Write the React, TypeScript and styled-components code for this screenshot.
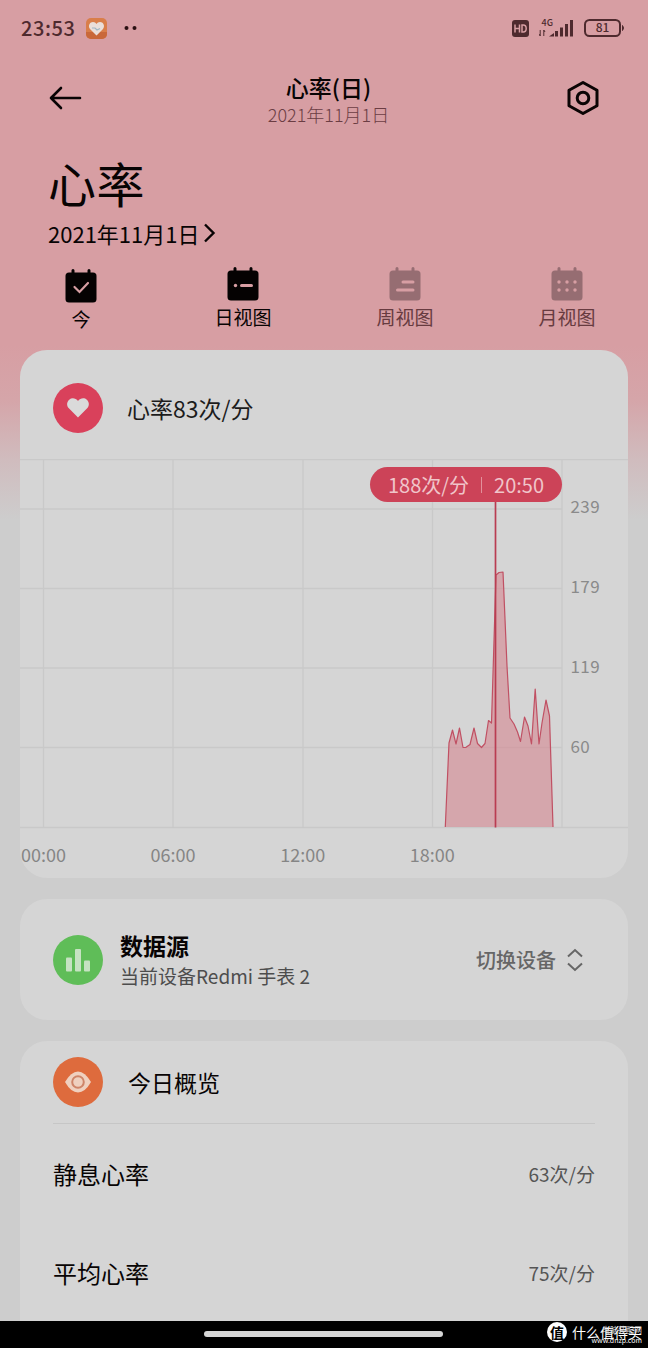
import React from 'react';
import styled, { createGlobalStyle } from 'styled-components';

const GlobalStyle = createGlobalStyle`
  * { box-sizing: border-box; }
  html, body { margin: 0; padding: 0; }
  body { font-family: "Noto Sans CJK SC", sans-serif; color: #050505; }
  svg { display: block; flex: none; }
`;

const Screen = styled.div`
  width: 648px;
  height: 1348px;
  overflow: hidden;
  display: flex;
  flex-direction: column;
  background: linear-gradient(180deg, #d79ea3 0px, #d79ea3 345px, #d5a5a9 400px, #d0bcbe 460px, #cdcdcd 520px, #cdcdcd 100%);
`;

const Label = styled.span<{ $size: number; $lh?: number; $color?: string; $weight?: number; $track?: number }>`
  font-size: ${p => p.$size}px;
  line-height: ${p => p.$lh ?? Math.round(p.$size * 1.3)}px;
  color: ${p => p.$color ?? '#080404'};
  font-weight: ${p => p.$weight ?? 400};
  letter-spacing: ${p => p.$track ?? 0}px;
  white-space: nowrap;
`;

const StatusBar = styled.header`
  height: 56px;
  flex: none;
  display: flex;
  align-items: center;
  justify-content: space-between;
  padding: 0 23px 0 21px;
`;

const StatusGroup = styled.div<{ $gap: number }>`
  display: flex;
  align-items: center;
  gap: ${p => p.$gap}px;
`;

const NavBar = styled.nav`
  height: 84px;
  flex: none;
  display: flex;
  align-items: center;
  justify-content: space-between;
  padding: 0 48px;
`;

const NavTitle = styled.div`
  display: flex;
  flex-direction: column;
  align-items: center;
  padding: 3px 0 0 9px;
`;

const Hero = styled.section`
  height: 124px;
  flex: none;
  display: flex;
  flex-direction: column;
  align-items: flex-start;
  padding: 9px 0 0 48px;
`;

const DateButton = styled.div`
  display: flex;
  align-items: center;
  gap: 4px;
  margin-top: 5px;
`;

const Tabs = styled.div`
  height: 86px;
  flex: none;
  display: grid;
  grid-template-columns: repeat(4, 162px);
`;

const Tab = styled.div<{ $drop?: number }>`
  display: flex;
  flex-direction: column;
  align-items: center;
  gap: 3px;
  padding-top: ${p => 3 + (p.$drop ?? 0)}px;
`;

const Card = styled.section<{ $height: number; $open?: boolean }>`
  height: ${p => p.$height}px;
  flex: none;
  margin: 0 20px ${p => (p.$open ? 0 : 21)}px;
  background: #d5d5d5;
  border-radius: ${p => (p.$open ? '27px 27px 0 0' : '27px')};
  position: relative;
`;

const CardHead = styled.div<{ $height: number; $gap: number; $pad?: number }>`
  height: ${p => p.$height}px;
  display: flex;
  align-items: center;
  gap: ${p => p.$gap}px;
  padding: ${p => p.$pad ?? 0}px 33px 0;
`;

const Disc = styled.div<{ $color: string }>`
  width: 50px;
  height: 50px;
  flex: none;
  border-radius: 50%;
  background: ${p => p.$color};
  display: flex;
  align-items: center;
  justify-content: center;
`;

const Axis = styled.div`
  display: grid;
  grid-template-columns: repeat(4, 129.6px);
  padding: 13px 0 0 1px;
`;

const Tooltip = styled.div`
  position: absolute;
  left: 350px;
  top: 117px;
  width: 192px;
  height: 35px;
  border-radius: 18px;
  background: #cc4358;
  display: flex;
  align-items: center;
  justify-content: center;
  gap: 12px;
`;

const TooltipRule = styled.i`
  width: 1px;
  height: 16px;
  background: #e3909b;
`;

const Stack = styled.div`
  flex: 1;
  display: flex;
  flex-direction: column;
`;

const Switcher = styled.div`
  display: flex;
  align-items: center;
  gap: 11px;
  margin-right: 12px;
`;

const Metric = styled.div`
  height: 99px;
  margin: 0 33px;
  display: flex;
  align-items: center;
  justify-content: space-between;
`;

const Divider = styled.div`
  height: 1px;
  margin: 0 33px;
  background: #c6c6c6;
`;

const BottomBar = styled.footer`
  height: 27px;
  flex: none;
  background: #000;
  display: flex;
  justify-content: flex-end;
  position: relative;
`;

const HomeHandle = styled.div`
  position: absolute;
  left: 204px;
  top: 10px;
  width: 239px;
  height: 6px;
  border-radius: 3px;
  background: #d6d6d6;
`;

const Watermark = styled.div`
  display: flex;
  align-items: center;
  gap: 5px;
  height: 21px;
  padding-right: 6px;
`;

const WatermarkSeal = styled.div`
  width: 20px;
  height: 20px;
  border-radius: 50%;
  background: #fff;
  display: flex;
  align-items: center;
  justify-content: center;
`;

const SiteStamp = styled.div`
  position: absolute;
  right: 6px;
  top: 2px;
  display: flex;
  flex-direction: column;
  align-items: flex-end;
`;

const dark = '#4e2a2e';
const muted = '#966d72';

const CalendarIcon = ({ color, children }: { color: string; children: React.ReactNode }) => (
  <svg width="32" height="34" viewBox="0 0 32 34" fill="none">
    <path d="M8 1.5v5M24 1.5v5" stroke={color} strokeWidth="3" strokeLinecap="round" />
    <rect x="0.5" y="3.5" width="31" height="30" rx="3.5" fill={color} />
    {children}
  </svg>
);

const HORIZONTALS = [0.5, 50, 129.5, 209, 288.5, 368.5];
const VERTICALS = [23.5, 153, 283, 412.5, 542];
const SCALE = [
  [239, 54], [179, 134], [119, 213.5], [60, 293.5],
];
const CURVE =
  '425.3,368 429,284 432.5,271 436,285 439.5,269 443,288.5 446,288.3 450,285.5 454,269 457.5,284.5 461.5,288.5 465,284.5 468.5,261.5 471.5,264 476,116 479,113.5 483,113 487,207 490,259 494,265 497.5,273 500.5,282.5 504.5,258 508,267 511.5,285 515.2,230 519,285 522,264 526,241 529.5,257 533,368';

const HeartRateChart = () => (
  <svg width="608" height="370" viewBox="0 0 608 370">
    {HORIZONTALS.map((y, i) => (
      <line key={y} x1="0" x2={i === 0 || i === 5 ? 608 : 542} y1={y} y2={y} stroke="#c9c9c9" strokeWidth="1.3" />
    ))}
    {VERTICALS.map(x => (
      <line key={x} x1={x} x2={x} y1="0" y2="368.5" stroke="#c9c9c9" strokeWidth="1.3" />
    ))}
    <polygon points={CURVE} fill="#d57f8a" fillOpacity="0.55" />
    <polyline points={CURVE} fill="none" stroke="#c05063" strokeWidth="1.2" strokeLinejoin="round" />
    <line x1="475.5" x2="475.5" y1="40" y2="368.5" stroke="#b93d52" strokeWidth="1.7" />
    {SCALE.map(([value, y]) => (
      <text key={value} x="550.5" y={y} fontFamily="Noto Sans CJK SC" fontSize="17" letterSpacing="0.4" fill="#8a8a8a">
        {value}
      </text>
    ))}
  </svg>
);

export default function App() {
  return (
    <>
      <GlobalStyle />
      <Screen>
        <StatusBar>
          <StatusGroup $gap={10}>
            <Label $size={20} $color={dark} $weight={500} $track={0.6}>23:53</Label>
            <svg width="21" height="21" viewBox="0 0 21 21">
              <rect width="21" height="21" rx="5" fill="#d97e4a" />
              <path d="M0 14h21v2a5 5 0 0 1-5 5H5a5 5 0 0 1-5-5z" fill="#c9683a" />
              <path d="M10.5 17.5 4 11C1.5 7.500 4 4 7 4c1.600 0 2.800.8 3.500 2 .7-1.200 1.900-2 3.500-2 3 0 5.500 3.500 3 7z" fill="#eadfda" />
              <path d="m6 10 3 0 2 2 3-1.500" fill="none" stroke="#9fb6c4" strokeWidth="1.200" />
            </svg>
            <svg width="26" height="6" viewBox="0 0 26 6" fill="#2a1012">
              <circle cx="9.500" cy="3" r="2" />
              <circle cx="17.500" cy="3" r="2" />
            </svg>
          </StatusGroup>
          <StatusGroup $gap={10}>
            <svg width="17" height="17" viewBox="0 0 17 17">
              <rect width="17" height="17" rx="3" fill={dark} />
              <path d="M3 4.500v8M7.500 4.500v8M3 8.500h4.500M10 5v7h1.200c2 0 3-1.500 3-3.500s-1-3.500-3-3.500z" fill="none" stroke="#d79ea3" strokeWidth="1.500" />
            </svg>
            <svg width="35" height="20" viewBox="0 0 35 20" fill={dark}>
              <text x="2.500" y="7.500" fontFamily="Noto Sans CJK SC" fontSize="9" fontWeight="500">4G</text>
              <path d="M1.200 18l0-6M4.800 12l0 6M0 16l1.200 2M4.800 12l1.200 2" stroke={dark} strokeWidth="1" />
              <path d="M10 18.500l5-3.500v3.500z" />
              <rect x="16" y="13" width="3" height="5.500" />
              <rect x="21" y="9.500" width="3" height="9" />
              <rect x="26" y="6" width="3" height="12.500" />
              <rect x="31" y="2" width="3" height="16.500" />
            </svg>
            <svg width="41" height="18" viewBox="0 0 41 18">
              <rect x="1" y="1" width="35" height="16" rx="4.500" fill="none" stroke={dark} strokeWidth="2" />
              <path d="M38.500 6.500q2 2.500 0 5z" fill={dark} stroke={dark} />
              <text x="18.500" y="13.300" textAnchor="middle" fontFamily="Noto Sans CJK SC" fontSize="12" fontWeight="500" fill={dark}>81</text>
            </svg>
          </StatusGroup>
        </StatusBar>

        <NavBar>
          <svg width="34" height="24" viewBox="0 0 34 24" fill="none" stroke="#080404" strokeWidth="2.600" strokeLinecap="round" strokeLinejoin="round">
            <path d="M32 12H3M13 2 3 12l10 10" />
          </svg>
          <NavTitle>
            <Label $size={23} $lh={28} $weight={500}>心率(日)</Label>
            <Label $size={18} $lh={26} $color="#6b3d43" $weight={300}>2021年11月1日</Label>
          </NavTitle>
          <svg width="34" height="36" viewBox="0 0 34 36" fill="none" stroke="#0b0404" strokeWidth="3" strokeLinejoin="round">
            <path d="M17 2.500 31 10.300v15.400L17 33.500 3 25.700V10.300z" />
            <circle cx="17" cy="18" r="5.800" />
          </svg>
        </NavBar>

        <Hero>
          <Label $size={48} $lh={66} $track={0.5}>心率</Label>
          <DateButton>
            <Label $size={22} $lh={26}>2021年11月1日</Label>
            <svg width="14" height="20" viewBox="0 0 14 20" fill="none" stroke="#080404" strokeWidth="2.400">
              <path d="m2 1.500 8.500 8.500L2 18.500" />
            </svg>
          </DateButton>
        </Hero>

        <Tabs>
          <Tab $drop={2}>
            <CalendarIcon color="#050202"><path d="m9.500 18 5 5L23 14" stroke="#d79ea3" strokeWidth="2.200" strokeLinecap="round" /></CalendarIcon>
            <Label $size={19} $lh={26}>今</Label>
          </Tab>
          <Tab>
            <CalendarIcon color="#050202">
              <circle cx="8.500" cy="18.500" r="1.700" fill="#d79ea3" />
              <path d="M14.500 18.500h10" stroke="#d79ea3" strokeWidth="3" strokeLinecap="round" />
            </CalendarIcon>
            <Label $size={19} $lh={26}>日视图</Label>
          </Tab>
          <Tab>
            <CalendarIcon color={muted}><path d="M14 15h10M8.500 23h15.500" stroke="#d79ea3" strokeWidth="3" strokeLinecap="round" /></CalendarIcon>
            <Label $size={19} $lh={26} $color="#673b40">周视图</Label>
          </Tab>
          <Tab>
            <CalendarIcon color={muted}>
              {[8, 16, 24].map(x => [15, 23].map(y => <circle key={`${x}-${y}`} cx={x} cy={y} r="1.700" fill="#d79ea3" />))}
            </CalendarIcon>
            <Label $size={19} $lh={26} $color="#673b40">月视图</Label>
          </Tab>
        </Tabs>

        <Card $height={528}>
          <CardHead $height={109} $gap={24} $pad={7}>
            <Disc $color="#d9415b">
              <svg width="24" height="22" viewBox="0 0 24 22" fill="#dadada">
                <path d="M12 20.500 2.600 11C.2 8 1 4.600 3.200 2.700c2.600-2.200 6.600-1.600 8.800 1.300 2.200-2.900 6.200-3.500 8.800-1.300C23 4.600 23.800 8 21.400 11z" />
              </svg>
            </Disc>
            <Label $size={23} $color="#1c1c1c">心率83次/分</Label>
          </CardHead>
          <HeartRateChart />
          <Axis>
            {['00:00', '06:00', '12:00', '18:00'].map(t => (
              <Label key={t} $size={18} $lh={24} $color="#858585">{t}</Label>
            ))}
          </Axis>
          <Tooltip>
            <Label $size={20} $color="#f0c5ca">188次/分</Label>
            <TooltipRule />
            <Label $size={20} $color="#f0c5ca">20:50</Label>
          </Tooltip>
        </Card>

        <Card $height={121}>
          <CardHead $height={121} $gap={17}>
            <Disc $color="#5fbd58">
              <svg width="26" height="24" viewBox="0 0 26 24" fill="#c6e2c2">
                <rect x="1" y="9.500" width="6" height="14" rx="1" />
                <rect x="10" y="1" width="6" height="22.500" rx="1" />
                <rect x="19" y="12.500" width="6" height="11" rx="1" />
              </svg>
            </Disc>
            <Stack>
              <Label $size={23} $lh={32} $weight={700}>数据源</Label>
              <Label $size={19} $lh={30} $color="#4d4d4d">当前设备Redmi 手表 2</Label>
            </Stack>
            <Switcher>
              <Label $size={20} $color="#666" $weight={500}>切换设备</Label>
              <svg width="16" height="24" viewBox="0 0 16 24" fill="none" stroke="#666" strokeWidth="2">
                <path d="m1 8.500 7-6.500 7 6.500M1 15.500 8 22l7-6.500" />
              </svg>
            </Switcher>
          </CardHead>
        </Card>

        <Card $height={280} $open>
          <CardHead $height={82} $gap={25}>
            <Disc $color="#de6b3d">
              <svg width="28" height="24" viewBox="0 0 28 24" fill="none">
                <path d="M1 12Q7 1.500 14 1.500T27 12Q21 22.500 14 22.500T1 12z" fill="#efd0bf" />
                <circle cx="14" cy="12" r="5.800" stroke="#cf8468" strokeWidth="2" />
              </svg>
            </Disc>
            <Label $size={23}>今日概览</Label>
          </CardHead>
          <Divider />
          <Metric>
            <Label $size={24}>静息心率</Label>
            <Label $size={19} $color="#555">63次/分</Label>
          </Metric>
          <Metric>
            <Label $size={24}>平均心率</Label>
            <Label $size={19} $color="#555">75次/分</Label>
          </Metric>
        </Card>

        <BottomBar>
          <HomeHandle />
          <Watermark>
            <WatermarkSeal><Label $size={14} $lh={18} $weight={700} $color="#000">值</Label></WatermarkSeal>
            <Label $size={14} $lh={20} $color="#fff">什么值得买</Label>
          </Watermark>
          <SiteStamp>
            <Label $size={8} $lh={14} $color="#ddd">电脑装配网</Label>
            <Label $size={7} $lh={6} $color="#fff">www.dnzp.com</Label>
          </SiteStamp>
        </BottomBar>
      </Screen>
    </>
  );
}
